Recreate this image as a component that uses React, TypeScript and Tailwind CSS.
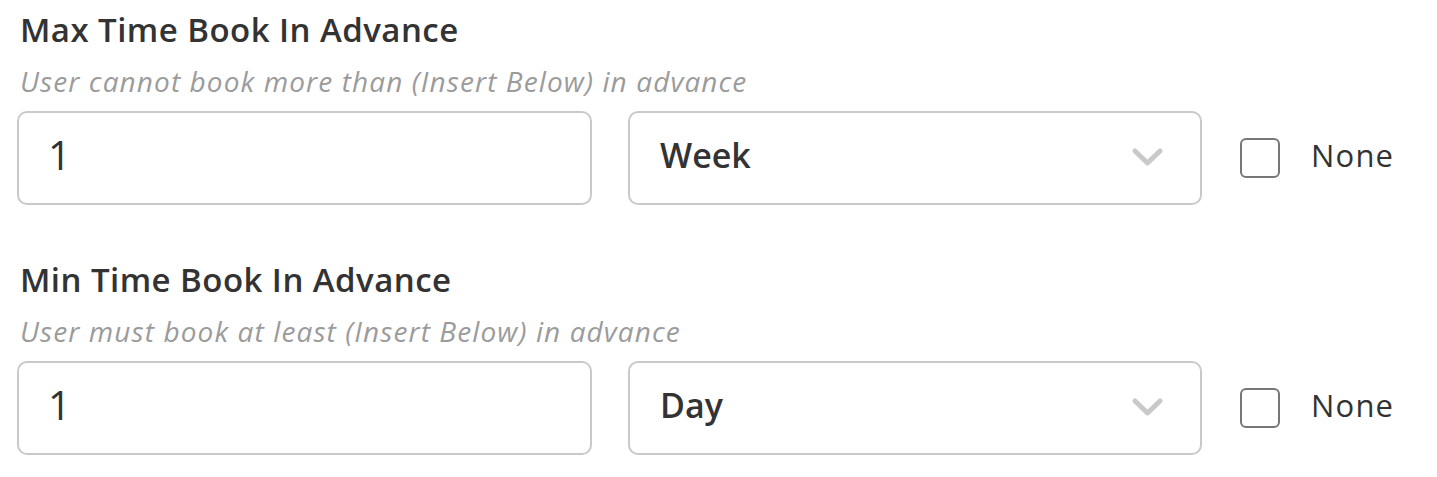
import React, { useState } from 'react';

type Unit = 'Day' | 'Week' | 'Month';

interface AdvanceRowProps {
  title: string;
  hint: string;
  amount: string;
  unit: Unit;
}

// One "book in advance" setting: label, hint, amount + unit + None checkbox
function AdvanceRow({ title, hint, amount, unit }: AdvanceRowProps) {
  const [value, setValue]   = useState(amount);
  const [period, setPeriod] = useState<Unit>(unit);
  const [none, setNone]     = useState(false);

  return (
    <div className="flex flex-col">
      <h3 className="pl-[3px] text-[33px] leading-[40px] tracking-[0.45px] font-semibold text-[#333333]">{title}</h3>
      <p className="pl-[3px] mt-[15px] text-[28px] leading-[32px] tracking-[1.1px] italic text-[#9b9b9b]">{hint}</p>

      <div className="mt-[14px] flex items-center">
        <input
          type="text"
          value={value}
          onChange={e => setValue(e.target.value)}
          className="w-[575px] h-[94px] pl-[29px] pr-[20px] pb-[7px] border-2 border-[#c9c9c9] rounded-[10px] text-[40px] text-[#333333] outline-none bg-white"
        />

        <div className="relative ml-[36px] w-[574px] h-[94px]">
          <select
            value={period}
            onChange={e => setPeriod(e.target.value as Unit)}
            className="appearance-none w-full h-full pl-[30px] pr-[60px] pb-[6px] border-2 border-[#c9c9c9] rounded-[10px] text-[34px] font-semibold text-[#333333] outline-none bg-white"
          >
            <option>Day</option>
            <option>Week</option>
            <option>Month</option>
          </select>
          <svg
            className="pointer-events-none absolute right-[38px] top-[36px]"
            width="33" height="21" viewBox="0 0 33 21" fill="none"
          >
            <path d="M4 4 L16.5 16 L29 4" stroke="#c9c9c9" strokeWidth="5" strokeLinecap="round" strokeLinejoin="round" />
          </svg>
        </div>

        <label className="ml-[38px] flex items-center cursor-pointer">
          <input
            type="checkbox"
            checked={none}
            onChange={e => setNone(e.target.checked)}
            className="appearance-none w-[40px] h-[40px] border-2 border-[#777777] rounded-[6px] bg-white"
          />
          <span className="ml-[31px] pb-[6px] text-[31px] tracking-[1.2px] font-medium text-[#333333]">None</span>
        </label>
      </div>
    </div>
  );
}

export default function App() {
  return (
    <div
      className="w-[1437px] h-[477px] bg-white pl-[17px] pt-[10px] flex flex-col gap-[55px]"
      style={{ fontFamily: '"Open Sans", sans-serif' }}
    >
      <AdvanceRow
        title="Max Time Book In Advance"
        hint="User cannot book more than (Insert Below) in advance"
        amount="1"
        unit="Week"
      />
      <AdvanceRow
        title="Min Time Book In Advance"
        hint="User must book at least (Insert Below) in advance"
        amount="1"
        unit="Day"
      />
    </div>
  );
}
